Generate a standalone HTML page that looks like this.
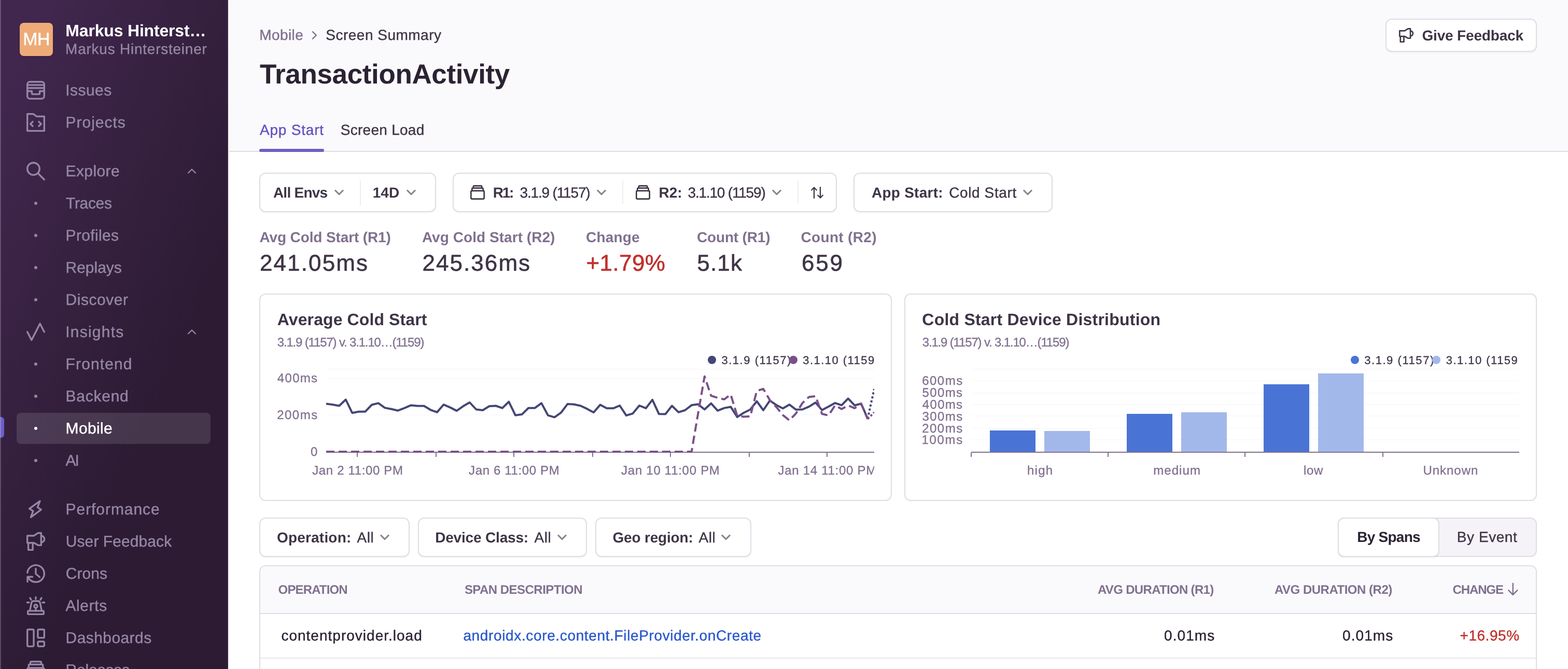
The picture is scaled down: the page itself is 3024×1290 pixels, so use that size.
<!DOCTYPE html>
<html lang="en">
<head>
<meta charset="utf-8">
<title>TransactionActivity - Screen Summary - Mobile</title>
<style>
*{box-sizing:border-box;margin:0;padding:0}
html,body{width:3024px;height:1290px;background:#fff}
body{position:relative;font-family:"Liberation Sans",sans-serif;-webkit-font-smoothing:antialiased;text-rendering:geometricPrecision}
#app{position:absolute;left:0;top:0;width:3024px;height:1290px;overflow:hidden;will-change:transform}
.a{position:absolute;display:block}
.t{position:absolute;display:block;white-space:pre;font-family:"Liberation Sans",sans-serif;-webkit-text-stroke:.014em currentColor}
.b{-webkit-text-stroke:0}
svg{overflow:visible}

.sb{left:0;top:0;width:440px;height:1290px;background:linear-gradient(294.17deg,#2c1b33 35.57%,#41274e 92.42%)}
.ic{fill:none;stroke:#9586a5;stroke-width:1.5;stroke-linecap:round;stroke-linejoin:round}
.icd{fill:none;stroke:#3e3446;stroke-width:1.5;stroke-linecap:round;stroke-linejoin:round}
.btn{background:#fff;border:2px solid #e0dce5;border-radius:12px;box-shadow:0 2px 2px rgba(43,34,51,.04)}
.panel{background:#fff;border:2px solid #e0dce5;border-radius:12px}

</style>
</head>
<body>
<div id="app">
<nav class="a" style="left:0;top:0" aria-label="Primary">
<div class="a sb"></div>
<div class="a" style="left:438px;top:0;width:2px;height:1290px;background:rgba(255,255,255,.05)"></div>
<div class="a" style="left:38px;top:44px;width:64px;height:64px;border-radius:8px;background:#eeab77;box-shadow:0 2px 4px rgba(0,0,0,.12)"></div>
<span class="t" style="left:44.3px;top:59.2px;font-size:34px;line-height:34px;color:#fff;letter-spacing:-0.63px;">MH</span>
<span class="t b" style="left:126.3px;top:42.9px;font-size:32px;line-height:32px;color:#fff;font-weight:700;letter-spacing:-0.18px;">Markus Hinterst…</span>
<span class="t" style="left:126.1px;top:81.3px;font-size:28px;line-height:28px;color:#9586a5;letter-spacing:0.76px;">Markus Hintersteiner</span>
<div class="a" style="left:32px;top:796px;width:374px;height:60px;border-radius:8px;background:rgba(255,255,255,.12)"></div>
<div class="a" style="left:0;top:804px;width:8px;height:40px;border-radius:0 6px 6px 0;background:#6c5fc7"></div>
<svg class="a" style="left:51.0px;top:156.0px" width="36" height="36" viewBox="0 0 16 16"><g class="ic"><rect x=".75" y=".75" width="14.5" height="14.5" rx="2.2"/><path d="M.75 3.5h14.5M.75 6.1h14.5M.75 8.75h3.9v1.65a1 1 0 0 0 1 1h4.7a1 1 0 0 0 1-1V8.75h3.9"/></g></svg>
<span class="t" style="left:126.3px;top:159.9px;font-size:30px;line-height:30px;color:#9586a5;letter-spacing:0.43px;">Issues</span>
<svg class="a" style="left:51.0px;top:218.0px" width="36" height="36" viewBox="0 0 16 16"><g class="ic"><path d="M.75.75h4.4c.5 0 .9.15 1.3.45l1.7 1.3c.4.3.8.4 1.3.4h5.8v12.35H.75z"/><path d="M5.4 7.4 3.4 9.3l2 1.9M10.6 7.4l2 1.9-2 1.9"/></g></svg>
<span class="t" style="left:126.6px;top:221.9px;font-size:30px;line-height:30px;color:#9586a5;letter-spacing:0.97px;">Projects</span>
<svg class="a" style="left:51.0px;top:312.0px" width="36" height="36" viewBox="0 0 16 16"><g class="ic"><circle cx="6" cy="6" r="5.25"/><path d="m9.8 9.8 5.45 5.45"/></g></svg>
<span class="t" style="left:126.6px;top:315.9px;font-size:30px;line-height:30px;color:#9586a5;letter-spacing:0.38px;">Explore</span>
<div class="a" style="left:66px;top:389px;width:6px;height:6px;border-radius:50%;background:#9586a5"></div>
<span class="t" style="left:127.1px;top:377.9px;font-size:30px;line-height:30px;color:#9586a5;letter-spacing:-0.34px;">Traces</span>
<div class="a" style="left:66px;top:451px;width:6px;height:6px;border-radius:50%;background:#9586a5"></div>
<span class="t" style="left:126.6px;top:439.9px;font-size:30px;line-height:30px;color:#9586a5;letter-spacing:0.33px;">Profiles</span>
<div class="a" style="left:66px;top:513px;width:6px;height:6px;border-radius:50%;background:#9586a5"></div>
<span class="t" style="left:126.6px;top:501.9px;font-size:30px;line-height:30px;color:#9586a5;letter-spacing:-0.04px;">Replays</span>
<div class="a" style="left:66px;top:575px;width:6px;height:6px;border-radius:50%;background:#9586a5"></div>
<span class="t" style="left:126.6px;top:563.9px;font-size:30px;line-height:30px;color:#9586a5;letter-spacing:0.52px;">Discover</span>
<svg class="a" style="left:51.0px;top:622.0px" width="36" height="36" viewBox="0 0 16 16"><g class="ic"><path d="M.75 8 4.4 15 11.6.9 15.25 8"/></g></svg>
<span class="t" style="left:126.3px;top:625.9px;font-size:30px;line-height:30px;color:#9586a5;letter-spacing:1.22px;">Insights</span>
<div class="a" style="left:66px;top:699px;width:6px;height:6px;border-radius:50%;background:#9586a5"></div>
<span class="t" style="left:126.6px;top:687.9px;font-size:30px;line-height:30px;color:#9586a5;letter-spacing:1.12px;">Frontend</span>
<div class="a" style="left:66px;top:761px;width:6px;height:6px;border-radius:50%;background:#9586a5"></div>
<span class="t" style="left:126.6px;top:749.9px;font-size:30px;line-height:30px;color:#9586a5;letter-spacing:0.74px;">Backend</span>
<div class="a" style="left:66px;top:823px;width:6px;height:6px;border-radius:50%;background:#fff"></div>
<span class="t" style="left:126.6px;top:811.9px;font-size:30px;line-height:30px;color:#fff;letter-spacing:0.32px;">Mobile</span>
<div class="a" style="left:66px;top:885px;width:6px;height:6px;border-radius:50%;background:#9586a5"></div>
<span class="t" style="left:126.4px;top:873.9px;font-size:30px;line-height:30px;color:#9586a5;letter-spacing:-1.93px;">AI</span>
<svg class="a" style="left:51.0px;top:964.0px" width="36" height="36" viewBox="0 0 16 16"><g class="ic"><path d="M11.55.95 2.5 7.45l3.25 2.05-2.05 5.4 8.9-6.6-3.1-2.05z"/></g></svg>
<span class="t" style="left:126.6px;top:967.9px;font-size:30px;line-height:30px;color:#9586a5;letter-spacing:0.94px;">Performance</span>
<svg class="a" style="left:51.0px;top:1026.0px" width="36" height="36" viewBox="0 0 16 16"><g class="ic"><path d="M.75 3.1h5.65L10 .75h2.6v10.5H10L6.4 9.2H.75z"/><path d="M12.6 3.2a2.8 2.8 0 0 1 0 5.6M1.6 9.2v6.05h3.8V9.2"/></g></svg>
<span class="t" style="left:126.8px;top:1029.9px;font-size:30px;line-height:30px;color:#9586a5;letter-spacing:0.08px;">User Feedback</span>
<svg class="a" style="left:51.0px;top:1088.0px" width="36" height="36" viewBox="0 0 16 16"><g class="ic"><path d="M.8 7.3A7.25 7.25 0 1 1 1.6 11.4"/><path d="M.9 15v-4.25h4.3M8 3.8v4.4l3.3 2.8"/></g></svg>
<span class="t" style="left:126.8px;top:1091.9px;font-size:30px;line-height:30px;color:#9586a5;letter-spacing:0.02px;">Crons</span>
<svg class="a" style="left:51.0px;top:1150.0px" width="36" height="36" viewBox="0 0 16 16"><g class="ic"><rect x="1.2" y="12.4" width="13.6" height="2.85" rx=".6"/><path d="M2.9 12.4 4.3 5.6a2 2 0 0 1 2-1.6h3.4a2 2 0 0 1 2 1.6l1.4 6.8"/><circle cx="8" cy="8.4" r="1.4"/><path d="M8 9.8v2.6M8 .6v1.6M3.1 1.3l.9 1.5M12.9 1.3 12 2.8M.6 5.2h1.6M13.8 5.2h1.6"/></g></svg>
<span class="t" style="left:126.4px;top:1153.9px;font-size:30px;line-height:30px;color:#9586a5;letter-spacing:0.63px;">Alerts</span>
<svg class="a" style="left:51.0px;top:1212.0px" width="36" height="36" viewBox="0 0 16 16"><g class="ic"><rect x=".75" y=".75" width="5.5" height="14.5" rx="1"/><rect x="9.75" y=".75" width="5.5" height="7.2" rx="1"/><rect x="9.75" y="11.1" width="5.5" height="4.15" rx="1"/></g></svg>
<span class="t" style="left:126.6px;top:1215.9px;font-size:30px;line-height:30px;color:#9586a5;letter-spacing:0.42px;">Dashboards</span>
<svg class="a" style="left:51.0px;top:1274.0px" width="36" height="36" viewBox="0 0 16 16"><g class="ic"><path d="M3.3 3.2V1.6c0-.5.4-.85.85-.85h7.7c.45 0 .85.35.85.85v1.6M1.9 6.2V4.1c0-.5.4-.9.9-.9h10.4c.5 0 .9.4.9.9v2.1"/><rect x=".75" y="6.2" width="14.5" height="9" rx="1.2"/></g></svg>
<span class="t" style="left:126.6px;top:1277.9px;font-size:30px;line-height:30px;color:#9586a5;letter-spacing:-0.22px;">Releases</span>
<svg class="a" style="left:370px;top:329.5px" width="1" height="1"><path d="M-7.0 3.5 L0 -3.5 L7.0 3.5" fill="none" stroke="#9586a5" stroke-width="2.3" stroke-linecap="round" stroke-linejoin="round"/></svg>
<svg class="a" style="left:370px;top:639.5px" width="1" height="1"><path d="M-7.0 3.5 L0 -3.5 L7.0 3.5" fill="none" stroke="#9586a5" stroke-width="2.3" stroke-linecap="round" stroke-linejoin="round"/></svg>
</nav>
<div class="a" style="left:0;top:0;width:2px;height:1290px;background:rgba(255,255,255,.2)"></div>
<div class="a" style="left:442px;top:0;width:2582px;height:293px;background:#faf9fb;border-bottom:2px solid #e0dce5"></div>
<span class="t" style="left:500.3px;top:54.3px;font-size:28px;line-height:28px;color:#80708f;letter-spacing:0.39px;">Mobile</span>
<svg class="a" style="left:0;top:0" width="1" height="1"><path d="M602.9499999999999 61.2 L609.85 68 L602.9499999999999 74.8" fill="none" stroke="#786a86" stroke-width="2.3" stroke-linecap="round" stroke-linejoin="round" /></svg>
<span class="t" style="left:628.3px;top:54.3px;font-size:28px;line-height:28px;color:#3e3446;letter-spacing:0.49px;">Screen Summary</span>
<span class="t b" style="left:501.0px;top:116.9px;font-size:53px;line-height:53px;color:#2b2233;font-weight:700;letter-spacing:-0.37px;">TransactionActivity</span>
<span class="t" style="left:501.0px;top:236.5px;font-size:28px;line-height:28px;color:#5f52c2;letter-spacing:0.8px;">App Start</span>
<span class="t" style="left:656.8px;top:236.5px;font-size:28px;line-height:28px;color:#3e3446;letter-spacing:0.27px;">Screen Load</span>
<div class="a" style="left:500px;top:287px;width:125px;height:6px;border-radius:3px;background:#6c5fc7"></div>
<div class="a btn" style="left:2672px;top:36px;width:292px;height:64px"></div>
<svg class="a" style="left:2698px;top:54px" width="28" height="28" viewBox="0 0 16 16"><g class="icd"><path d="M.75 3.1h5.65L10 .75h2.6v10.5H10L6.4 9.2H.75z"/><path d="M12.6 3.2a2.8 2.8 0 0 1 0 5.6M1.6 9.2v6.05h3.8V9.2"/></g></svg>
<span class="t b" style="left:2742.5px;top:55.3px;font-size:28px;line-height:28px;color:#3e3446;font-weight:700;letter-spacing:-0.18px;">Give Feedback</span>
<div class="a btn" style="left:500px;top:333px;width:341px;height:76px"></div>
<div class="a" style="left:694px;top:348px;width:2px;height:48px;background:#eeecf1"></div>
<span class="t b" style="left:526.9px;top:358.1px;font-size:28px;line-height:28px;color:#3e3446;font-weight:700;letter-spacing:-0.75px;">All Envs</span>
<svg class="a" style="left:0;top:0" width="1" height="1"><path d="M646.75 367.375 L654 374.625 L661.25 367.375" fill="none" stroke="#8b8590" stroke-width="3" stroke-linecap="round" stroke-linejoin="round" /></svg>
<span class="t b" style="left:718.8px;top:358.1px;font-size:28px;line-height:28px;color:#3e3446;font-weight:700;letter-spacing:-0.02px;">14D</span>
<svg class="a" style="left:0;top:0" width="1" height="1"><path d="M785.75 367.375 L793 374.625 L800.25 367.375" fill="none" stroke="#8b8590" stroke-width="3" stroke-linecap="round" stroke-linejoin="round" /></svg>
<div class="a btn" style="left:873px;top:333px;width:741px;height:76px"></div>
<div class="a" style="left:1200px;top:348px;width:2px;height:45px;background:#eeecf1"></div>
<div class="a" style="left:1538px;top:348px;width:2px;height:45px;background:#eeecf1"></div>
<svg class="a" style="left:907px;top:356.5px" width="28" height="28" viewBox="0 0 16 16"><g class="icd"><path d="M3.3 3.2V1.6c0-.5.4-.85.85-.85h7.7c.45 0 .85.35.85.85v1.6M1.9 6.2V4.1c0-.5.4-.9.9-.9h10.4c.5 0 .9.4.9.9v2.1"/><rect x=".75" y="6.2" width="14.5" height="9" rx="1.2"/></g></svg>
<span class="t b" style="left:950.7px;top:358.1px;font-size:28px;line-height:28px;color:#3e3446;font-weight:700;letter-spacing:-2.23px;">R1:</span>
<span class="t" style="left:1002.5px;top:358.1px;font-size:28px;line-height:28px;color:#3e3446;letter-spacing:-1.16px;">3.1.9 (1157)</span>
<svg class="a" style="left:0;top:0" width="1" height="1"><path d="M1152.75 367.375 L1160 374.625 L1167.25 367.375" fill="none" stroke="#8b8590" stroke-width="3" stroke-linecap="round" stroke-linejoin="round" /></svg>
<svg class="a" style="left:1226px;top:356.5px" width="28" height="28" viewBox="0 0 16 16"><g class="icd"><path d="M3.3 3.2V1.6c0-.5.4-.85.85-.85h7.7c.45 0 .85.35.85.85v1.6M1.9 6.2V4.1c0-.5.4-.9.9-.9h10.4c.5 0 .9.4.9.9v2.1"/><rect x=".75" y="6.2" width="14.5" height="9" rx="1.2"/></g></svg>
<span class="t b" style="left:1270.5px;top:358.1px;font-size:28px;line-height:28px;color:#3e3446;font-weight:700;letter-spacing:-0.08px;">R2:</span>
<span class="t" style="left:1326.5px;top:358.1px;font-size:28px;line-height:28px;color:#3e3446;letter-spacing:-1.19px;">3.1.10 (1159)</span>
<svg class="a" style="left:0;top:0" width="1" height="1"><path d="M1490.75 367.375 L1498 374.625 L1505.25 367.375" fill="none" stroke="#8b8590" stroke-width="3" stroke-linecap="round" stroke-linejoin="round" /></svg>
<svg class="a" style="left:0;top:0" width="1" height="1"><path d="M1565.2 366.5 l4.8 -5 l4.8 5 M1570 361.6 v20.2" fill="none" stroke="#3e3446" stroke-width="2.3" stroke-linecap="round" stroke-linejoin="round" /></svg>
<svg class="a" style="left:0;top:0" width="1" height="1"><path d="M1577.2 376.5 l4.8 5 l4.8 -5 M1582 381.3 v-20.2" fill="none" stroke="#3e3446" stroke-width="2.3" stroke-linecap="round" stroke-linejoin="round" /></svg>
<div class="a btn" style="left:1646px;top:333px;width:384px;height:76px"></div>
<span class="t b" style="left:1680.9px;top:358.1px;font-size:28px;line-height:28px;color:#3e3446;font-weight:700;letter-spacing:0.27px;">App Start:</span>
<span class="t" style="left:1830.2px;top:358.1px;font-size:28px;line-height:28px;color:#3e3446;letter-spacing:0.61px;">Cold Start</span>
<svg class="a" style="left:0;top:0" width="1" height="1"><path d="M1974.75 367.375 L1982 374.625 L1989.25 367.375" fill="none" stroke="#8b8590" stroke-width="3" stroke-linecap="round" stroke-linejoin="round" /></svg>
<span class="t b" style="left:500.4px;top:444.3px;font-size:28px;line-height:28px;color:#80708f;font-weight:700;letter-spacing:-0.12px;">Avg Cold Start (R1)</span>
<span class="t" style="left:500.9px;top:486.1px;font-size:44px;line-height:44px;color:#3e3446;letter-spacing:2.14px;">241.05ms</span>
<span class="t b" style="left:813.9px;top:444.3px;font-size:28px;line-height:28px;color:#80708f;font-weight:700;letter-spacing:0.05px;">Avg Cold Start (R2)</span>
<span class="t" style="left:814.4px;top:486.1px;font-size:44px;line-height:44px;color:#3e3446;letter-spacing:2.07px;">245.36ms</span>
<span class="t b" style="left:1130.0px;top:444.3px;font-size:28px;line-height:28px;color:#80708f;font-weight:700;letter-spacing:0.16px;">Change</span>
<span class="t" style="left:1130.5px;top:486.1px;font-size:44px;line-height:44px;color:#c0302c;letter-spacing:0.39px;">+1.79%</span>
<span class="t b" style="left:1344.0px;top:444.3px;font-size:28px;line-height:28px;color:#80708f;font-weight:700;letter-spacing:-0.18px;">Count (R1)</span>
<span class="t" style="left:1344.3px;top:486.1px;font-size:44px;line-height:44px;color:#3e3446;letter-spacing:1.14px;">5.1k</span>
<span class="t b" style="left:1544.5px;top:444.3px;font-size:28px;line-height:28px;color:#80708f;font-weight:700;letter-spacing:0.32px;">Count (R2)</span>
<span class="t" style="left:1545.9px;top:486.1px;font-size:44px;line-height:44px;color:#3e3446;letter-spacing:2.8px;">659</span>
<div class="a panel" style="left:500px;top:566px;width:1220px;height:400px"></div>
<div class="a panel" style="left:1744px;top:566px;width:1220px;height:400px"></div>
<span class="t b" style="left:534.8px;top:599.5px;font-size:32px;line-height:32px;color:#3e3446;font-weight:700;letter-spacing:0.1px;">Average Cold Start</span>
<span class="t" style="left:534.7px;top:649.2px;font-size:24px;line-height:24px;color:#80708f;letter-spacing:-1.16px;">3.1.9 (1157) v. 3.1.10…(1159)</span>
<div class="a" style="left:629px;top:711px;width:1057px;height:2px;background:#faf9fc"></div>
<div class="a" style="left:629px;top:729px;width:1057px;height:2px;background:#faf9fc"></div>
<div class="a" style="left:629px;top:799px;width:1057px;height:2px;background:#faf9fc"></div>
<span class="t" style="left:534.8px;top:718.4px;font-size:24px;line-height:24px;color:#80708f;letter-spacing:1.32px;">400ms</span>
<span class="t" style="left:534.2px;top:788.9px;font-size:24px;line-height:24px;color:#80708f;letter-spacing:1.48px;">200ms</span>
<span class="t" style="left:598.9px;top:859.9px;font-size:24px;line-height:24px;color:#80708f;">0</span>
<div class="a" style="left:629px;top:871px;width:1057px;height:2px;background:#80708f"></div>
<div class="a" style="left:688px;top:873px;width:2px;height:8px;background:#80708f"></div>
<div class="a" style="left:840px;top:873px;width:2px;height:8px;background:#80708f"></div>
<div class="a" style="left:990px;top:873px;width:2px;height:8px;background:#80708f"></div>
<div class="a" style="left:1142px;top:873px;width:2px;height:8px;background:#80708f"></div>
<div class="a" style="left:1292px;top:873px;width:2px;height:8px;background:#80708f"></div>
<div class="a" style="left:1444px;top:873px;width:2px;height:8px;background:#80708f"></div>
<div class="a" style="left:1594px;top:873px;width:2px;height:8px;background:#80708f"></div>
<div class="a" style="left:589px;top:880px;width:1097px;height:50px;overflow:hidden" id="xl1">
<span class="t" style="left:13.2px;top:16.0px;font-size:24px;line-height:24px;color:#80708f;letter-spacing:0.65px;">Jan 2 11:00 PM</span>
<span class="t" style="left:315.0px;top:16.0px;font-size:24px;line-height:24px;color:#80708f;letter-spacing:0.65px;">Jan 6 11:00 PM</span>
<span class="t" style="left:609.1px;top:16.0px;font-size:24px;line-height:24px;color:#80708f;letter-spacing:0.72px;">Jan 10 11:00 PM</span>
<span class="t" style="left:911.5px;top:16.0px;font-size:24px;line-height:24px;color:#80708f;letter-spacing:0.72px;">Jan 14 11:00 PM</span>
</div>
<svg class="a" style="left:0px;top:0px;overflow:hidden" width="1686" height="1290" viewBox="0 0 1686 1290"><polyline points="629.0,778.6 641.6,780.2 654.2,782.5 666.8,770.5 679.3,796.2 691.9,793.8 704.5,793.7 717.1,780.5 729.7,777.4 742.2,786.4 754.8,788.7 767.4,791.7 780.0,786.9 792.6,781.4 805.2,782.8 817.8,782.8 830.3,790.3 842.9,794.9 855.5,780.2 868.1,785.6 880.7,792.1 893.2,783.3 905.8,776.0 918.4,789.5 931.0,791.0 943.6,783.3 956.2,782.5 968.8,786.9 981.3,774.7 993.9,800.7 1006.5,799.1 1019.1,786.7 1031.7,786.7 1044.2,777.4 1056.8,800.8 1069.4,804.6 1082.0,795.7 1094.6,778.9 1107.2,779.7 1119.8,782.5 1132.3,788.4 1144.9,795.2 1157.5,780.6 1170.1,787.2 1182.7,787.3 1195.2,782.0 1207.8,801.1 1220.4,797.3 1233.0,782.0 1245.6,787.2 1258.2,770.9 1270.8,798.3 1283.3,798.5 1295.9,782.5 1308.5,794.9 1321.1,791.0 1333.7,781.3 1346.2,779.4 1358.8,789.5 1371.4,777.8 1384.0,791.8 1396.6,786.9 1409.2,784.4 1421.8,804.2 1434.3,796.0 1446.9,789.8 1459.5,773.7 1472.1,791.0 1484.7,772.4 1497.2,781.0 1509.8,787.5 1522.4,780.2 1535.0,789.8 1547.6,789.5 1560.2,784.1 1572.8,776.3 1585.3,790.7 1597.9,784.1 1610.5,777.1 1623.1,781.4 1635.7,768.5 1648.2,781.7 1660.8,778.3 1673.4,807.3" fill="none" stroke="#444674" stroke-width="4" stroke-linejoin="round"/><polyline points="1673.4,807.3 1686.0,749.9" fill="none" stroke="#444674" stroke-width="4" stroke-dasharray="4 4" stroke-linejoin="round"/><polyline points="629.0,871.0 641.6,871.0 654.2,871.0 666.8,871.0 679.3,871.0 691.9,871.0 704.5,871.0 717.1,871.0 729.7,871.0 742.2,871.0 754.8,871.0 767.4,871.0 780.0,871.0 792.6,871.0 805.2,871.0 817.8,871.0 830.3,871.0 842.9,871.0 855.5,871.0 868.1,871.0 880.7,871.0 893.2,871.0 905.8,871.0 918.4,871.0 931.0,871.0 943.6,871.0 956.2,871.0 968.8,871.0 981.3,871.0 993.9,871.0 1006.5,871.0 1019.1,871.0 1031.7,871.0 1044.2,871.0 1056.8,871.0 1069.4,871.0 1082.0,871.0 1094.6,871.0 1107.2,871.0 1119.8,871.0 1132.3,871.0 1144.9,871.0 1157.5,871.0 1170.1,871.0 1182.7,871.0 1195.2,871.0 1207.8,871.0 1220.4,871.0 1233.0,871.0 1245.6,871.0 1258.2,871.0 1270.8,871.0 1283.3,871.0 1295.9,871.0 1308.5,871.0 1321.1,871.0 1333.7,871.0 1346.2,798.0 1358.8,725.8 1371.4,763.1 1384.0,767.0 1396.6,770.1 1409.2,760.8 1421.8,801.9 1434.3,803.5 1446.9,803.0 1459.5,753.8 1472.1,749.9 1484.7,771.6 1497.2,784.8 1509.8,800.4 1522.4,810.5 1535.0,797.3 1547.6,777.1 1560.2,765.4 1572.8,763.9 1585.3,798.0 1597.9,801.1 1610.5,781.7 1623.1,788.7 1635.7,781.7 1648.2,787.2 1660.8,778.6 1673.4,808.1" fill="none" stroke="#7a5088" stroke-width="4" stroke-dasharray="16 8" stroke-linejoin="round"/><polyline points="1673.4,808.1 1686.0,794.9" fill="none" stroke="#7a5088" stroke-width="4" stroke-dasharray="4 4" stroke-linejoin="round"/></svg>
<div class="a" style="left:1364px;top:680px;width:322px;height:30px;overflow:hidden">
<div class="a" style="left:1px;top:6px;width:16px;height:16px;border-radius:50%;background:#444674"></div>
<span class="t" style="left:27.4px;top:3.8px;font-size:22px;line-height:22px;color:#3e3446;letter-spacing:1.55px;">3.1.9 (1157)</span>
<div class="a" style="left:158px;top:6px;width:16px;height:16px;border-radius:50%;background:#7a5088"></div>
<span class="t" style="left:184.2px;top:3.8px;font-size:22px;line-height:22px;color:#3e3446;letter-spacing:1.46px;">3.1.10 (1159)</span>
</div>
<span class="t b" style="left:1778.3px;top:599.5px;font-size:32px;line-height:32px;color:#3e3446;font-weight:700;letter-spacing:0.22px;">Cold Start Device Distribution</span>
<span class="t" style="left:1778.7px;top:649.2px;font-size:24px;line-height:24px;color:#80708f;letter-spacing:-1.16px;">3.1.9 (1157) v. 3.1.10…(1159)</span>
<div class="a" style="left:1873px;top:711px;width:1057px;height:2px;background:#faf9fc"></div>
<div class="a" style="left:1873px;top:733px;width:1057px;height:2px;background:#faf9fc"></div>
<div class="a" style="left:1873px;top:757px;width:1057px;height:2px;background:#faf9fc"></div>
<div class="a" style="left:1873px;top:779px;width:1057px;height:2px;background:#faf9fc"></div>
<div class="a" style="left:1873px;top:801px;width:1057px;height:2px;background:#faf9fc"></div>
<div class="a" style="left:1873px;top:825px;width:1057px;height:2px;background:#faf9fc"></div>
<div class="a" style="left:1873px;top:847px;width:1057px;height:2px;background:#faf9fc"></div>
<span class="t" style="left:1778.2px;top:723.2px;font-size:24px;line-height:24px;color:#80708f;letter-spacing:1.48px;">600ms</span>
<span class="t" style="left:1778.4px;top:746.0px;font-size:24px;line-height:24px;color:#80708f;letter-spacing:1.42px;">500ms</span>
<span class="t" style="left:1778.8px;top:768.9px;font-size:24px;line-height:24px;color:#80708f;letter-spacing:1.32px;">400ms</span>
<span class="t" style="left:1778.5px;top:791.7px;font-size:24px;line-height:24px;color:#80708f;letter-spacing:1.41px;">300ms</span>
<span class="t" style="left:1778.2px;top:814.6px;font-size:24px;line-height:24px;color:#80708f;letter-spacing:1.48px;">200ms</span>
<span class="t" style="left:1777.6px;top:837.4px;font-size:24px;line-height:24px;color:#80708f;letter-spacing:1.64px;">100ms</span>
<div class="a" style="left:1909px;top:830px;width:88px;height:41px;background:#4974d5"></div>
<div class="a" style="left:2014px;top:831px;width:88px;height:40px;background:#a3b8ea"></div>
<div class="a" style="left:2173px;top:798px;width:88px;height:73px;background:#4974d5"></div>
<div class="a" style="left:2278px;top:795px;width:88px;height:76px;background:#a3b8ea"></div>
<div class="a" style="left:2437px;top:741px;width:88px;height:130px;background:#4974d5"></div>
<div class="a" style="left:2542px;top:720px;width:88px;height:151px;background:#a3b8ea"></div>
<div class="a" style="left:1873px;top:871px;width:1057px;height:2px;background:#80708f"></div>
<div class="a" style="left:1872px;top:873px;width:2px;height:8px;background:#80708f"></div>
<div class="a" style="left:2136px;top:873px;width:2px;height:8px;background:#80708f"></div>
<div class="a" style="left:2400px;top:873px;width:2px;height:8px;background:#80708f"></div>
<div class="a" style="left:2666px;top:873px;width:2px;height:8px;background:#80708f"></div>
<span class="t" style="left:1981.0px;top:896.0px;font-size:24px;line-height:24px;color:#80708f;letter-spacing:1.25px;">high</span>
<span class="t" style="left:2224.2px;top:896.0px;font-size:24px;line-height:24px;color:#80708f;letter-spacing:1.08px;">medium</span>
<span class="t" style="left:2514.0px;top:896.0px;font-size:24px;line-height:24px;color:#80708f;letter-spacing:0.72px;">low</span>
<span class="t" style="left:2744.5px;top:896.0px;font-size:24px;line-height:24px;color:#80708f;letter-spacing:0.96px;">Unknown</span>
<div class="a" style="left:2603.8px;top:680px;width:323.6999999999998px;height:30px;overflow:hidden">
<div class="a" style="left:1.0px;top:6px;width:16px;height:16px;border-radius:50%;background:#4974d5"></div>
<span class="t" style="left:27.4px;top:3.8px;font-size:22px;line-height:22px;color:#3e3446;letter-spacing:1.55px;">3.1.9 (1157)</span>
<div class="a" style="left:158.19999999999982px;top:6px;width:16px;height:16px;border-radius:50%;background:#a3b8ea"></div>
<span class="t" style="left:185.0px;top:3.8px;font-size:22px;line-height:22px;color:#3e3446;letter-spacing:1.46px;">3.1.10 (1159)</span>
</div>
<div class="a btn" style="left:500px;top:998px;width:290px;height:76px"></div>
<div class="a btn" style="left:806px;top:998px;width:326px;height:76px"></div>
<div class="a btn" style="left:1148px;top:998px;width:301px;height:76px"></div>
<span class="t b" style="left:534.0px;top:1022.9px;font-size:28px;line-height:28px;color:#3e3446;font-weight:700;letter-spacing:0.19px;">Operation:</span>
<span class="t" style="left:688.5px;top:1022.9px;font-size:28px;line-height:28px;color:#3e3446;letter-spacing:0.6px;">All</span>
<svg class="a" style="left:0;top:0" width="1" height="1"><path d="M734.75 1032.375 L742 1039.625 L749.25 1032.375" fill="none" stroke="#8b8590" stroke-width="3" stroke-linecap="round" stroke-linejoin="round" /></svg>
<span class="t b" style="left:839.2px;top:1022.9px;font-size:28px;line-height:28px;color:#3e3446;font-weight:700;letter-spacing:-0.18px;">Device Class:</span>
<span class="t" style="left:1030.5px;top:1022.9px;font-size:28px;line-height:28px;color:#3e3446;letter-spacing:0.6px;">All</span>
<svg class="a" style="left:0;top:0" width="1" height="1"><path d="M1076.75 1032.375 L1084 1039.625 L1091.25 1032.375" fill="none" stroke="#8b8590" stroke-width="3" stroke-linecap="round" stroke-linejoin="round" /></svg>
<span class="t b" style="left:1181.5px;top:1022.9px;font-size:28px;line-height:28px;color:#3e3446;font-weight:700;letter-spacing:-0.19px;">Geo region:</span>
<span class="t" style="left:1347.5px;top:1022.9px;font-size:28px;line-height:28px;color:#3e3446;letter-spacing:0.6px;">All</span>
<svg class="a" style="left:0;top:0" width="1" height="1"><path d="M1392.75 1032.375 L1400 1039.625 L1407.25 1032.375" fill="none" stroke="#8b8590" stroke-width="3" stroke-linecap="round" stroke-linejoin="round" /></svg>
<div class="a" style="left:2580px;top:998px;width:384px;height:76px;border-radius:12px;background:#f5f3f7;border:2px solid #e0dce5"></div>
<div class="a" style="left:2580px;top:998px;width:196px;height:76px;border-radius:12px;background:#fff;border:2px solid #e0dce5;box-shadow:0 2px 2px rgba(43,34,51,.06)"></div>
<span class="t b" style="left:2617.2px;top:1021.9px;font-size:28px;line-height:28px;color:#2b2233;font-weight:700;letter-spacing:-0.74px;">By Spans</span>
<span class="t" style="left:2809.8px;top:1021.9px;font-size:28px;line-height:28px;color:#3e3446;letter-spacing:0.55px;">By Event</span>
<div class="a" style="left:500px;top:1090px;width:2464px;height:260px;border:2px solid #e0dce5;border-radius:12px;background:#fff;overflow:hidden"><div class="a" style="left:0;top:0;width:2460px;height:92px;background:#faf9fb;border-bottom:2px solid #e0dce5"></div><div class="a" style="left:0;top:176px;width:2460px;height:2px;background:#e8e5ec"></div></div>
<span class="t b" style="left:536.6px;top:1126.2px;font-size:24px;line-height:24px;color:#80708f;font-weight:700;letter-spacing:-0.86px;">OPERATION</span>
<span class="t b" style="left:895.9px;top:1126.2px;font-size:24px;line-height:24px;color:#80708f;font-weight:700;letter-spacing:-0.53px;">SPAN DESCRIPTION</span>
<span class="t b" style="left:2117.0px;top:1126.2px;font-size:24px;line-height:24px;color:#80708f;font-weight:700;letter-spacing:-0.68px;">AVG DURATION (R1)</span>
<span class="t b" style="left:2458.0px;top:1126.2px;font-size:24px;line-height:24px;color:#80708f;font-weight:700;letter-spacing:-0.49px;">AVG DURATION (R2)</span>
<span class="t b" style="left:2801.6px;top:1126.2px;font-size:24px;line-height:24px;color:#80708f;font-weight:700;letter-spacing:-1.14px;">CHANGE</span>
<svg class="a" style="left:0;top:0" width="1" height="1"><path d="M2917.8 1125 v21.6 M2909.3 1138.2 l8.5 8.6 l8.5 -8.6" fill="none" stroke="#80708f" stroke-width="2.4" stroke-linecap="round" stroke-linejoin="round" /></svg>
<span class="t" style="left:542.4px;top:1211.6px;font-size:28px;line-height:28px;color:#2b2233;letter-spacing:1.01px;">contentprovider.load</span>
<span class="t" style="left:893.4px;top:1211.6px;font-size:28px;line-height:28px;color:#2a58cb;letter-spacing:0.64px;">androidx.core.content.FileProvider.onCreate</span>
<span class="t" style="left:2245.1px;top:1211.6px;font-size:28px;line-height:28px;color:#2b2233;letter-spacing:1.06px;">0.01ms</span>
<span class="t" style="left:2589.1px;top:1211.6px;font-size:28px;line-height:28px;color:#2b2233;letter-spacing:1.06px;">0.01ms</span>
<span class="t" style="left:2815.5px;top:1211.6px;font-size:28px;line-height:28px;color:#c0302c;letter-spacing:0.54px;">+16.95%</span>
</div>
</body>
</html>
